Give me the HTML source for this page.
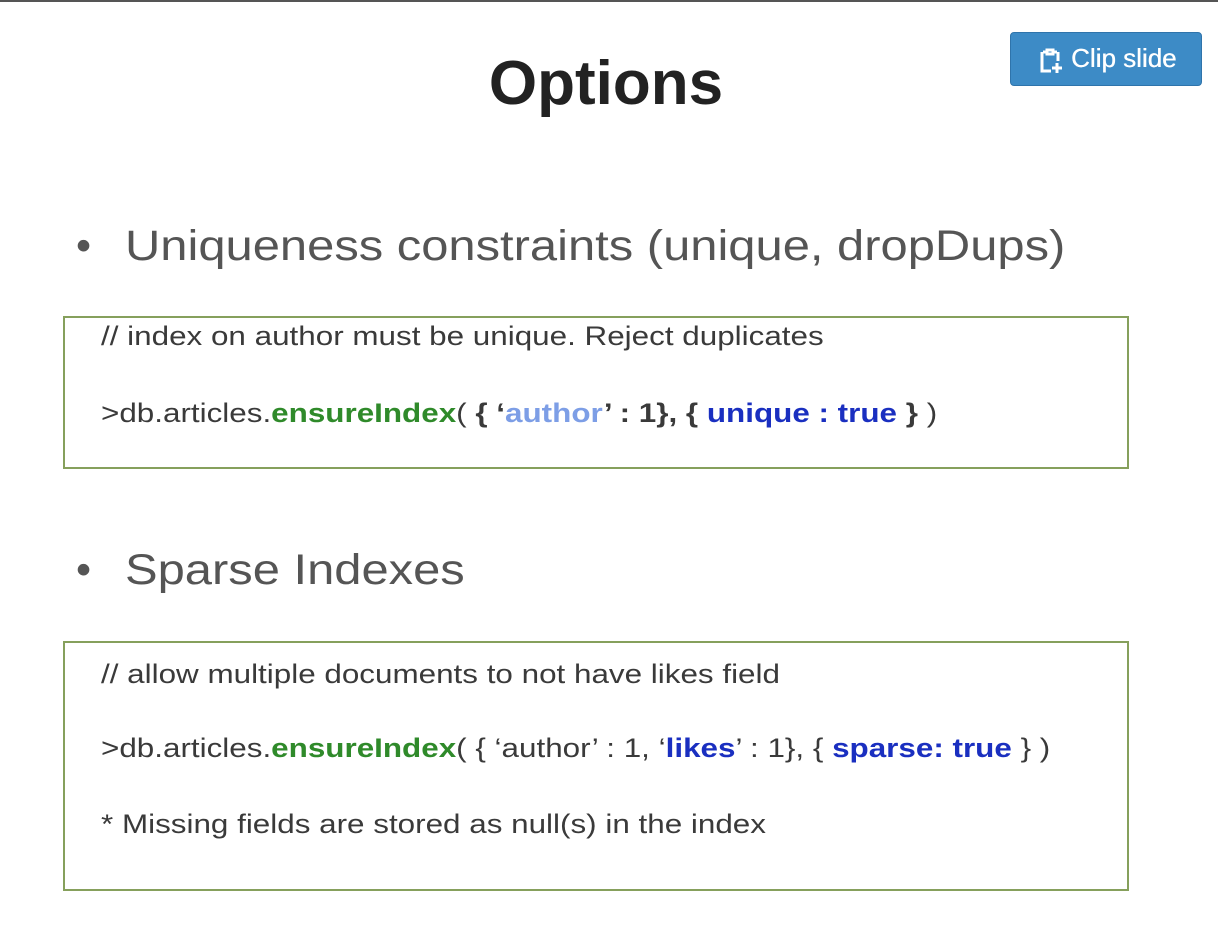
<!DOCTYPE html>
<html><head><meta charset="utf-8"><style>
body{margin:0;width:1218px;height:926px;background:#fff;position:relative;overflow:hidden;font-family:"Liberation Sans",Arial,sans-serif;}
.top{position:absolute;left:0;top:0;width:1218px;height:2px;background:#555;}
.t{position:absolute;white-space:nowrap;transform-origin:0 50%;}
.btn{position:absolute;left:1010px;top:32px;width:192px;height:54px;background:#3d8bc6;border:1px solid #2f74ab;border-radius:4px;box-sizing:border-box;color:#fff;font-size:26px;}
.box{position:absolute;left:63px;width:1066px;border:2px solid #86a05c;box-sizing:border-box;}
.c{font-size:27px;color:#3a3a3a;transform:scaleX(1.163);}
.g{color:#2f8a2a;font-weight:bold}
.lb{color:#7d9ee6;font-weight:bold}
.db{color:#1a2fc0;font-weight:bold}
.bul{font-size:43px;color:#555;}
.bs{transform:scaleX(1.137);}
</style></head><body>
<div class="top"></div>
<div class="t" style="left:0;width:1212px;text-align:center;top:48px;font-size:62px;font-weight:bold;color:#222;">Options</div>
<div class="btn"><svg style="position:absolute;left:28px;top:14px" width="24" height="28" viewBox="0 0 24 28"><path d="M4 5h3M15 5h3M3 5v19h9M19 5v9M8 3h6v4H8z" stroke="#fff" stroke-width="3" fill="none"/><path d="M18 16v10M13 21h10" stroke="#fff" stroke-width="3"/></svg><span class="t" style="left:60px;top:10px;transform:scaleX(1.0);text-shadow:0.4px 0 0 #fff">Clip slide</span></div>
<div class="t bul" style="left:76px;top:222px;">•</div>
<div class="t bul bs" style="left:125px;top:222px;">Uniqueness constraints (unique, dropDups)</div>
<div class="box" style="top:316px;height:153px;"></div>
<div class="t c" style="left:101px;top:321px;">// index on author must be unique. Reject duplicates</div>
<div class="t c" style="left:101px;top:398px;">&gt;db.articles.<span class="g">ensureIndex</span>( <b>{ ‘</b><span class="lb">author</span><b>’ : 1}, { </b><span class="db">unique : true</span> <b>}</b> )</div>
<div class="t bul" style="left:76px;top:546px;">•</div>
<div class="t bul bs" style="left:125px;top:546px;">Sparse Indexes</div>
<div class="box" style="top:641px;height:250px;"></div>
<div class="t c" style="left:101px;top:659px;">// allow multiple documents to not have likes field</div>
<div class="t c" style="left:101px;top:733px;">&gt;db.articles.<span class="g">ensureIndex</span>( { ‘author’ : 1, ‘<span class="db">likes</span>’ : 1}, { <span class="db">sparse: true</span> } )</div>
<div class="t c" style="left:101px;top:809px;">* Missing fields are stored as null(s) in the index</div>
</body></html>
